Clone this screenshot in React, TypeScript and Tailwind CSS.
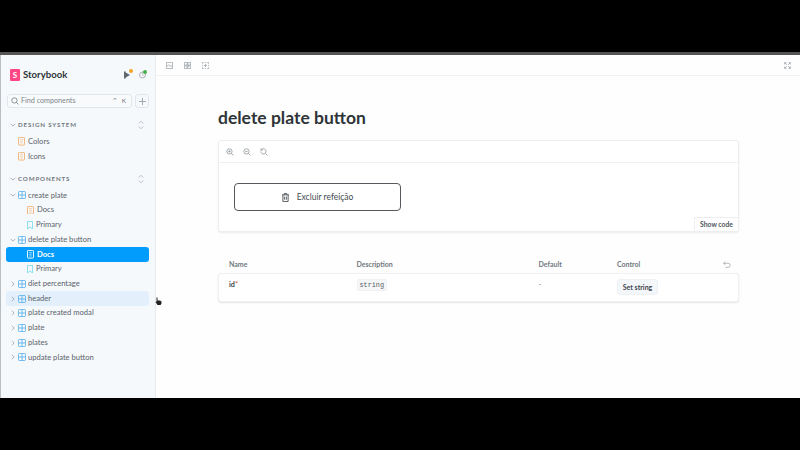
import React from "react";

const Chevron = ({ open }: { open?: boolean }) => (
  <svg width="6" height="6" viewBox="0 0 8 8" fill="none" stroke="#9aa3ab" strokeWidth="1.1" className="shrink-0">
    {open ? <path d="M1 2.5 4 5.5 7 2.5" /> : <path d="M2.5 1 5.5 4 2.5 7" />}
  </svg>
);

const Grid = () => (
  <svg width="8" height="8" viewBox="0 0 10 10" fill="none" stroke="#5ab0ee" strokeWidth="1.1" className="shrink-0">
    <rect x="0.5" y="0.5" width="9" height="9" rx="1.8" />
    <path d="M5 .5v9M.5 5h9" />
  </svg>
);

const Doc = ({ color = "#f3b274" }: { color?: string }) => (
  <svg width="7" height="8.5" viewBox="0 0 8 10" fill="none" stroke={color} strokeWidth="1.1" className="shrink-0">
    <rect x="0.5" y="0.5" width="7" height="9" rx="0.8" />
    <path d="M2.5 3h3M2.5 5h3M2.5 7h3" strokeWidth="0.7" />
  </svg>
);

const Bookmark = () => (
  <svg width="6" height="8.5" viewBox="0 0 7 10" fill="none" stroke="#7fdcec" strokeWidth="1.1" className="shrink-0">
    <path d="M.5.5h6v9L3.5 7 .5 9.5z" />
  </svg>
);

const Expand = () => (
  <svg width="6" height="10" viewBox="0 0 8 12" fill="none" stroke="#a9b0b6" strokeWidth="1" className="shrink-0">
    <path d="M1 4 4 1 7 4M1 8l3 3 3-3" />
  </svg>
);

const Section = ({ label }: { label: string }) => (
  <div className="flex items-center h-[15px] pl-[9px] pr-[11px]">
    <Chevron open />
    <span className="ml-[2px] text-[6.2px] font-bold tracking-[0.85px] text-[#6f7880]">{label}</span>
    <span className="ml-auto"><Expand /></span>
  </div>
);

const Row = ({ label, kind, indent, open, active, hover }: { label: string; kind: "comp" | "doc" | "story"; indent?: boolean; open?: boolean; active?: boolean; hover?: boolean }) => (
  <div className={`flex items-center h-[14.74px] mr-[6px] ml-[5px] rounded-[3px] ${indent ? "pl-[21px]" : "pl-[4px]"} ${active ? "bg-[#029cfd]" : hover ? "bg-[#e3f0fb]" : ""}`}>
    {kind === "comp" && <Chevron open={open} />}
    <span className={`flex ${kind === "comp" ? "ml-[2px]" : ""}`}>
      {kind === "comp" && <Grid />}
      {kind === "doc" && <Doc color={active ? "#ffffff" : "#f3b274"} />}
      {kind === "story" && <Bookmark />}
    </span>
    <span className={`${kind === "comp" ? "ml-[2px]" : "ml-[3px]"} text-[7.6px] leading-none ${active ? "font-bold text-white" : "text-[#5a626a]"}`}>{label}</span>
  </div>
);

const ToolIcon = ({ d }: { d: string }) => (
  <svg width="7" height="7" viewBox="0 0 10 10" fill="none" stroke="#8d959c" strokeWidth="1">
    <path d={d} />
  </svg>
);

const Zoom = ({ plus, minus, reset }: { plus?: boolean; minus?: boolean; reset?: boolean }) => (
  <svg width="8" height="8" viewBox="0 0 10 10" fill="none" stroke="#8d959c" strokeWidth="1">
    {reset ? <path d="M1.4 2.6A3.3 3.3 0 1 1 1 4.3M1.2.8v2h2" /> : <circle cx="4.3" cy="4.3" r="3.3" />}
    <path d="M6.8 6.8 9.3 9.3" />
    {(plus || minus) && <path d="M2.8 4.3h3" />}
    {plus && <path d="M4.3 2.8v3" />}
  </svg>
);

export default function App() {
  return (
    <div className="w-[800px] h-[450px] overflow-hidden bg-black flex flex-col font-['Lato','Open_Sans',sans-serif]">
      <div className="h-[52px] shrink-0 bg-black" />
      <div className="h-[3px] shrink-0 bg-[#555555]" />
      <div className="h-[343px] shrink-0 flex bg-white">
        <aside className="w-[156px] shrink-0 bg-[#f6f9fc] border-l border-l-[#b9bec3] border-r border-r-[#e8ecef] flex flex-col">
          <div className="flex items-center h-[14px] mt-[13px] ml-[9px] mr-[8px]">
            <div className="w-[10px] h-[12px] rounded-[1px] bg-[#ff4785] text-white text-[8px] font-bold flex items-center justify-center leading-none">S</div>
            <span className="ml-[3px] text-[9.6px] font-bold text-[#2e3438]">Storybook</span>
            <div className="ml-auto flex items-center gap-[9px] mr-[1px]">
              <div className="relative flex">
                <svg width="6" height="8" viewBox="0 0 7 8" fill="#5f676e"><path d="M0 0h2v8H0zM2 1l5 3-5 3z" /></svg>
                <span className="absolute -top-[2px] -right-[3px] w-[4px] h-[4px] rounded-full bg-[#f5a623]" />
              </div>
              <div className="relative flex">
                <svg width="7" height="8" viewBox="0 0 8 8" fill="none" stroke="#a0a7ad"><circle cx="4" cy="4" r="3.4" /><path d="M4 1v3l2 1" strokeWidth="0.7" /></svg>
                <span className="absolute -top-[1px] -right-[1px] w-[4px] h-[4px] rounded-full bg-[#47b04b]" />
              </div>
            </div>
          </div>
          <div className="flex items-center mt-[12px] ml-[6px] mr-[6px] gap-[3px]">
            <div className="flex-1 h-[14px] rounded-[3px] bg-[#f8fafc] border border-[#e2e6ea] flex items-center pl-[3px] pr-[5px]">
              <svg width="8" height="8" viewBox="0 0 10 10" fill="none" stroke="#6f7880" strokeWidth="1"><circle cx="4.3" cy="4.3" r="3.3" /><path d="M6.8 6.8 9.3 9.3" /></svg>
              <span className="ml-[2px] text-[7.2px] leading-none text-[#7d858c]">Find components</span>
              <span className="ml-auto text-[6.5px] leading-none text-[#6f7880]">⌃&nbsp;&nbsp;K</span>
            </div>
            <div className="w-[14px] h-[14px] rounded-[3px] border border-[#e2e6ea] flex items-center justify-center">
              <svg width="7" height="7" viewBox="0 0 8 8" stroke="#8d959c" strokeWidth="0.9"><path d="M4 0v8M0 4h8" /></svg>
            </div>
          </div>
          <div className="mt-[9px]"><Section label="DESIGN SYSTEM" /></div>
          <div className="mt-[2px]">
            <div className="flex items-center h-[15px] ml-[17px]"><Doc /><span className="ml-[3px] text-[7.6px] leading-none text-[#5a626a]">Colors</span></div>
            <div className="flex items-center h-[15px] ml-[17px]"><Doc /><span className="ml-[3px] text-[7.6px] leading-none text-[#5a626a]">Icons</span></div>
          </div>
          <div className="mt-[7px]"><Section label="COMPONENTS" /></div>
          <div className="mt-[2px] flex flex-col">
            <Row kind="comp" open label="create plate" />
            <Row kind="doc" indent label="Docs" />
            <Row kind="story" indent label="Primary" />
            <Row kind="comp" open label="delete plate button" />
            <Row kind="doc" indent active label="Docs" />
            <Row kind="story" indent label="Primary" />
            <Row kind="comp" label="diet percentage" />
            <Row kind="comp" hover label="header" />
            <Row kind="comp" label="plate created modal" />
            <Row kind="comp" label="plate" />
            <Row kind="comp" label="plates" />
            <Row kind="comp" label="update plate button" />
          </div>
        </aside>
        <main className="flex-1 min-w-0 flex flex-col relative bg-[#fefefe]">
          <svg width="7" height="8" viewBox="0 0 14 16" className="absolute left-[-1px] top-[242px]" fill="#222"><path d="M3 1h2v6h5l3 2v4l-2 3H5L1 10l2-1z" /></svg>
          <div className="h-[21px] shrink-0 border-b border-[#f0f2f4] flex items-center pl-[10px] pr-[9px] gap-[11px]">
            <ToolIcon d="M.5.5h9v9h-9zM.5 7l3-3 2 2 1.5-1 2.5 2" />
            <ToolIcon d="M.5.5h4v4h-4zM5.5.5h4v4h-4zM.5 5.5h4v4h-4zM5.5 5.5h4v4h-4z" />
            <ToolIcon d="M.5.5h2M4 .5h2M7.5.5h2v2M9.5 4v2M9.5 7.5v2h-2M6 9.5H4M2.5 9.5h-2v-2M.5 6V4M.5 2.5v-2M3 5h4M5 3v4" />
            <span className="ml-auto flex"><ToolIcon d="M1 3.5V1h2.5M6.5 1H9v2.5M9 6.5V9H6.5M3.5 9H1V6.5M1 1l3 3M9 1 6 4M9 9 6 6M1 9l3-3" /></span>
          </div>
          <div className="pl-[62px] pr-[61px]">
            <h1 className="mt-[30px] text-[17.5px] leading-[24px] font-bold text-[#2e3438]">delete plate button</h1>
            <div className="mt-[10px] h-[92px] border border-[#eceef0] rounded-[3px] shadow-[0_1px_2px_rgba(0,0,0,0.08)] bg-white flex flex-col relative">
              <div className="h-[22px] shrink-0 border-b border-[#eef0f2] flex items-center pl-[7px] gap-[9px]">
                <Zoom plus />
                <Zoom minus />
                <Zoom reset />
              </div>
              <div className="pl-[15px] pt-[20px]">
                <button className="w-[167px] h-[28px] rounded-[4px] border border-[#55595e] bg-white flex items-center justify-center gap-[8px]">
                  <svg width="7" height="9" viewBox="0 0 8 10" fill="none" stroke="#444a50" strokeWidth="1"><path d="M0 2h8M2.5 2V.5h3V2M1 2v7.5h6V2M3 4v3.5M5 4v3.5" /></svg>
                  <span className="text-[8.5px] leading-none text-[#444a50]">Excluir refeição</span>
                </button>
              </div>
              <div className="absolute right-0 bottom-0 h-[14px] w-[44px] border-l border-t border-[#eceef0] bg-white flex items-center justify-center text-[6.8px] font-bold leading-none text-[#4d555c]">Show code</div>
            </div>
            <div className="mt-[26px] flex items-center h-[12px] text-[7px] font-bold text-[#6f7880]">
              <span className="ml-[11px] w-[127.5px]">Name</span>
              <span className="w-[182px]">Description</span>
              <span className="w-[78.5px]">Default</span>
              <span>Control</span>
              <svg className="ml-auto mr-[8px]" width="8" height="7" viewBox="0 0 10 8" fill="none" stroke="#8d959c" strokeWidth="0.8"><path d="M3 .5 .8 2.5 3 4.5M1 2.5h5.5a2.4 2.4 0 0 1 0 5H3" /></svg>
            </div>
            <div className="mt-[3px] h-[29px] border border-[#eef0f2] rounded-[3px] shadow-[0_1px_2px_rgba(0,0,0,0.1)] bg-white flex items-start text-[7.2px]">
              <span className="ml-[10px] mt-[6px] w-[127.5px] font-bold text-[#3f464c]">id<span className="text-[#e8603c]">*</span></span>
              <span className="mt-[6px] w-[182px]"><span className="px-[2px] py-[1px] rounded-[2px] bg-[#f5f6f7] border border-[#f0f1f3] font-['Liberation_Mono',monospace] text-[6.8px] text-[#555c63]">string</span></span>
              <span className="mt-[6px] w-[78.5px] text-[#6f7880]">-</span>
              <span className="mt-[5px] h-[16px] w-[41px] rounded-[3px] bg-[#f4f7fa] border border-[#eef1f4] flex items-center justify-center text-[7px] font-bold leading-none text-[#3f464c]">Set string</span>
            </div>
          </div>
        </main>
      </div>
      <div className="flex-1 bg-black" />
    </div>
  );
}
